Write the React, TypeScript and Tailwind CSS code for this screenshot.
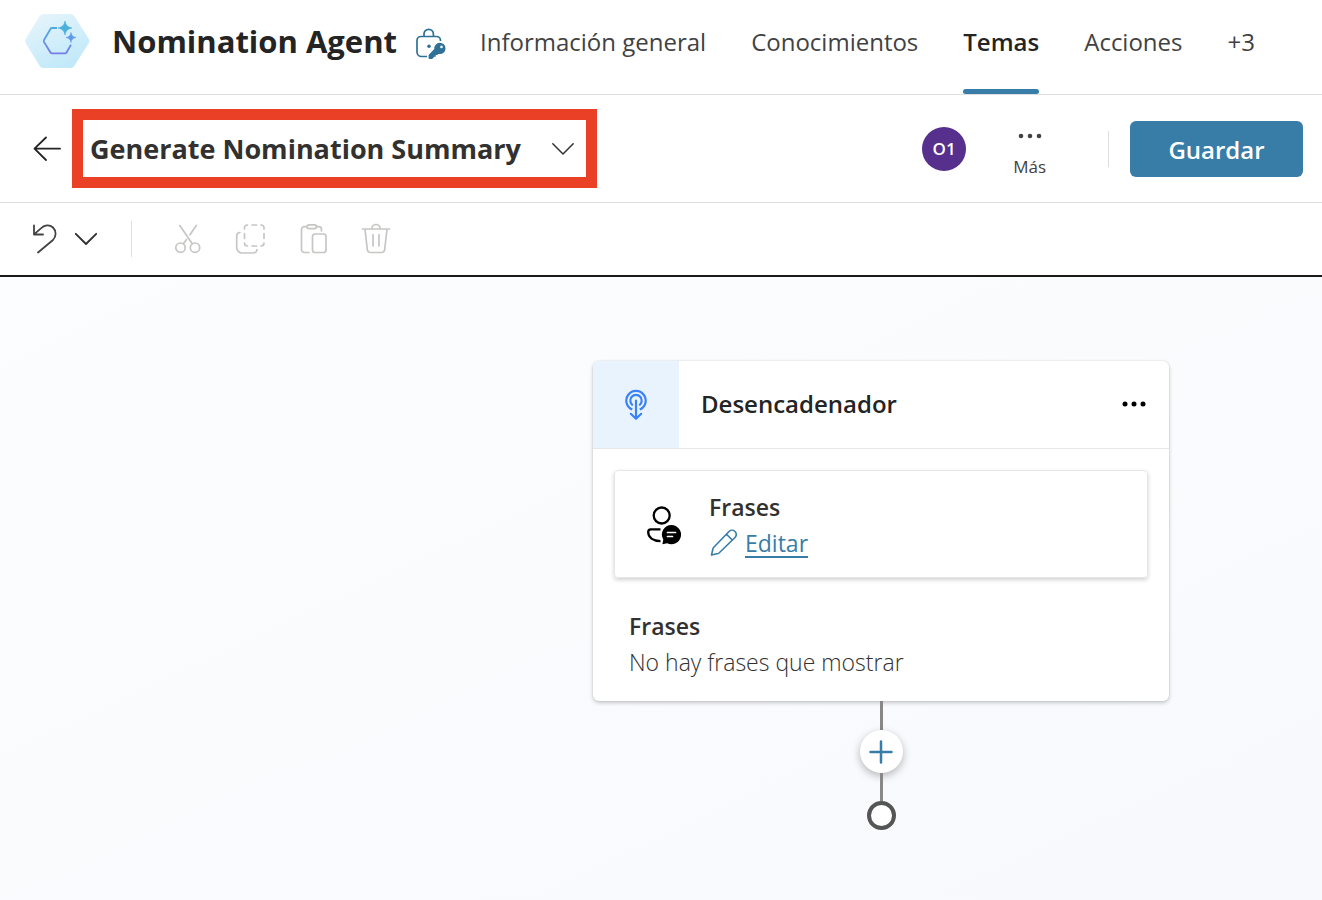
import React from "react";

const stroke = {
  fill: "none",
  stroke: "currentColor",
  strokeLinecap: "round" as const,
  strokeLinejoin: "round" as const,
};

function AgentLogo() {
  return (
    <svg width="66" height="56" viewBox="0 0 66 56" aria-hidden="true" className="shrink-0">
      <defs>
        <linearGradient id="hexFill" gradientUnits="userSpaceOnUse" x1="20" y1="0" x2="46" y2="56">
          <stop offset="0" stopColor="#e4f4fb" />
          <stop offset="1" stopColor="#bfe8f9" />
        </linearGradient>
        <linearGradient id="hexLine" gradientUnits="userSpaceOnUse" x1="0" y1="8" x2="0" y2="42">
          <stop offset="0" stopColor="#45b4d8" />
          <stop offset="0.5" stopColor="#5c9ee6" />
          <stop offset="1" stopColor="#7a79e6" />
        </linearGradient>
      </defs>
      <path
        d="M20 4H46a2 2 0 0 1 2 1L62 27a2 2 0 0 1 0 2L48 51a2 2 0 0 1-2 1H20a2 2 0 0 1-2-1L4.500 29a2 2 0 0 1 0-2L18 5a2 2 0 0 1 2-1Z"
        fill="url(#hexFill)"
        stroke="url(#hexFill)"
        strokeWidth="6"
        strokeLinejoin="round"
      />
      <path
        d="M33 15H28Q27 15 26.500 16L20 27Q19.500 28 20 29L26.500 39.500Q27 40.300 28 40.300H41Q42 40.300 42.500 39.500L47 31.800"
        fill="none"
        stroke="url(#hexLine)"
        strokeWidth="1.800"
      />
      <path d="M41 8C42 12.500 43.500 14 48 15C43.500 16 42 17.500 41 22C40 17.500 38.500 16 34 15C38.500 14 40 12.500 41 8Z" fill="#4bb0dc" stroke="#4bb0dc" strokeWidth="0.600" />
      <path d="M47 19.500C47.700 22.800 48.700 23.800 52 24.500C48.700 25.200 47.700 26.200 47 29.500C46.300 26.200 45.300 25.200 42 24.500C45.300 23.800 46.300 22.800 47 19.500Z" fill="#609ae6" stroke="#609ae6" strokeWidth="0.600" />
    </svg>
  );
}

function LockKey() {
  return (
    <svg width="32" height="32" viewBox="0 0 32 32" aria-hidden="true" className="shrink-0 text-[#2f7196]">
      <g {...stroke} strokeLinecap="butt" strokeWidth="1.700">
        <path d="M25.500 13V12.500a4 4 0 0 0-4-4H6a4 4 0 0 0-4 4V24a4.500 4.500 0 0 0 4.500 4.500H12" />
        <path d="M9 8.500V6a4.700 4.700 0 0 1 9.400 0V8.500" />
      </g>
      <circle cx="14" cy="18.300" r="1.800" fill="currentColor" />
      <path
        fillRule="evenodd"
        fill="currentColor"
        d="M24.800 14.700a5.700 5.700 0 0 1 0 11.400q-.8 0-1.500-.2l-1 1.200h-1.600v1.600h-1.500l-1.400 1.800q-.4.400-1 .400h-2.300q-.9 0-.9-.9v-2.700q0-.5.400-.9l5.300-5.300a5.700 5.700 0 0 1 5.500-6.400Zm1.700 2.900a1.300 1.300 0 1 0 0 2.600a1.300 1.300 0 0 0 0-2.600Z"
      />
    </svg>
  );
}

function BackArrow() {
  return (
    <svg width="30" height="28" viewBox="0 0 30 28" aria-hidden="true">
      <path d="M14 2.500L2.500 13.700L14 25M3 13.700H28" {...stroke} strokeWidth="1.800" />
    </svg>
  );
}

function Chevron({ weight }: { weight: number }) {
  return (
    <svg width="24" height="14" viewBox="0 0 24 14" aria-hidden="true">
      <path d="M1.800 1.800L12 12L22.200 1.800" {...stroke} strokeWidth={weight} />
    </svg>
  );
}

function Dots({ radius }: { radius: number }) {
  return (
    <svg width="24" height="6" viewBox="0 0 24 6" fill="currentColor" aria-hidden="true">
      <circle cx="3" cy="3" r={radius} />
      <circle cx="12" cy="3" r={radius} />
      <circle cx="21" cy="3" r={radius} />
    </svg>
  );
}

function Undo() {
  return (
    <svg width="26" height="32" viewBox="0 0 26 32" aria-hidden="true">
      <path d="M2 2.500V11.500H11M2.300 11.200L9.500 4.800C12.500 2 17.500 1.200 21 4.500C24.600 8 24.300 13.500 21 17L6 29.500" {...stroke} strokeWidth="1.800" />
    </svg>
  );
}

function Scissors() {
  return (
    <svg width="28" height="32" viewBox="0 0 28 32" aria-hidden="true">
      <g {...stroke} strokeWidth="1.700">
        <circle cx="6.500" cy="24.700" r="4.700" />
        <circle cx="21" cy="24.700" r="4.700" />
        <path d="M5.800 2.500L18.300 20.800M22.300 2.500L16 11.800M12.600 16.400L9.300 20.800" />
      </g>
    </svg>
  );
}

function CopyIcon() {
  return (
    <svg width="32" height="32" viewBox="0 0 32 32" aria-hidden="true">
      <g {...stroke} strokeWidth="1.700">
        <path d="M9.500 6V5a3 3 0 0 1 3-3M17 2h4.500M26 2a3 3 0 0 1 3 3v1M29 10.500v5M29 20a3 3 0 0 1-3 3M21.500 23H17M12.500 23a3 3 0 0 1-3-3M9.500 15.500v-5" />
        <path d="M5 9.500a3.500 3.500 0 0 0-3.300 3.500V24.500a5.500 5.500 0 0 0 5.500 5.500H18a4 4 0 0 0 4-3.500" />
      </g>
    </svg>
  );
}

function Paste() {
  return (
    <svg width="28" height="32" viewBox="0 0 28 32" aria-hidden="true">
      <g {...stroke} strokeWidth="1.700">
        <rect x="7" y="1.800" width="9.500" height="3.800" rx="1.900" />
        <path d="M7 3.700H4.200A2.700 2.700 0 0 0 1.500 6.400V26.500A3 3 0 0 0 4.500 29.500H9M16.500 3.700h2.300A2.700 2.700 0 0 1 21.500 6.400V8" />
        <rect x="12.500" y="11" width="13.500" height="18.500" rx="2.500" />
      </g>
    </svg>
  );
}

function Trash() {
  return (
    <svg width="30" height="32" viewBox="0 0 30 32" aria-hidden="true">
      <g {...stroke} strokeWidth="1.700">
        <path d="M1.500 6H28.500M11 6V5.500a4 4 0 0 1 8 0V6M4 6L6.300 26.500a3.300 3.300 0 0 0 3.300 3H20.400a3.300 3.300 0 0 0 3.300-3L26 6M12 11.700V23M18 11.700V23" />
      </g>
    </svg>
  );
}

function TriggerIcon() {
  return (
    <svg width="24" height="32" viewBox="0 0 24 32" aria-hidden="true" className="text-[#3b82f6]">
      <g {...stroke} strokeWidth="2.200">
        <path d="M8.300 20.600A9.700 9.700 0 1 1 15.700 20.600" strokeLinecap="butt" />
        <path d="M8.800 16.300A5.700 5.700 0 1 1 15.200 16.300" strokeLinecap="butt" />
        <path d="M12 11.500V29.500M6.800 24.800L12 29.800L17.200 24.800" />
      </g>
    </svg>
  );
}

function PersonChat() {
  return (
    <svg width="36" height="40" viewBox="0 0 36 40" aria-hidden="true" className="shrink-0 text-black">
      <circle cx="14.700" cy="10.500" r="8" {...stroke} strokeWidth="2.300" />
      <path d="M13.500 24.300H3.800A2.800 2.800 0 0 0 1.200 27.100C1.200 32.500 6 35.800 13.500 36.200" {...stroke} strokeLinecap="butt" strokeWidth="2.300" />
      <path d="M24.500 20a9.600 9.600 0 1 1-4.300 18.200L15.400 39.300L16.300 34.500A9.600 9.600 0 0 1 24.500 20Z" fill="currentColor" />
      <path d="M20.500 27.500H28.500M20.500 31.500H25.500" fill="none" stroke="white" strokeWidth="1.700" strokeLinecap="round" />
    </svg>
  );
}

function Pencil() {
  return (
    <svg width="28" height="28" viewBox="0 0 28 28" aria-hidden="true" className="shrink-0">
      <path d="M20 2.500A4.200 4.200 0 0 1 26 8.500L10.300 23.700Q9.700 24.300 9 24.500L2.500 26L4 19.500Q4.200 18.800 4.800 18.200L20 2.500ZM17.500 5.300L23.200 11" {...stroke} strokeWidth="1.600" />
    </svg>
  );
}

const tabs = ["Información general", "Conocimientos", "Temas", "Acciones", "+3"];

const tools = [
  { label: "Cortar", icon: <Scissors /> },
  { label: "Copiar", icon: <CopyIcon /> },
  { label: "Pegar", icon: <Paste /> },
  { label: "Eliminar", icon: <Trash /> },
];

export default function App() {
  return (
    <div className="flex min-h-screen flex-col bg-white font-['Open_Sans','Noto_Sans',sans-serif] text-[#323130]">
      <header className="flex h-[95px] items-start border-b border-[#dcdfe0] pl-[24px]">
        <div className="flex h-[82px] items-center">
          <AgentLogo />
          <h1 className="ml-[22px] text-[31px] leading-[40px] font-bold whitespace-nowrap text-[#242424]">Nomination Agent</h1>
          <span className="ml-[18px] pt-[6px]">
            <LockKey />
          </span>
        </div>
        <nav className="ml-[33px] flex gap-[45px] text-[24px] leading-[84px] whitespace-nowrap text-[#424242]">
          {tabs.map((tab) => (
            <a
              key={tab}
              href="#"
              className={
                tab === "Temas"
                  ? "flex h-[94px] flex-col justify-between font-semibold text-[#242424]"
                  : "flex h-[94px] flex-col"
              }
            >
              {tab}
              {tab === "Temas" && <span className="h-[5px] rounded-sm bg-[#387da8]" />}
            </a>
          ))}
        </nav>
      </header>

      <section className="flex h-[108px] items-center border-b border-[#dedede] pr-[19px] pl-[32px]">
        <button type="button" aria-label="Atrás" className="text-[#242424]">
          <BackArrow />
        </button>
        <button
          type="button"
          className="ml-[10px] flex h-[79px] w-[525px] items-center justify-between border-[11px] border-[#ea4025] pr-[11px] pl-[7px] whitespace-nowrap"
        >
          <span className="text-[27px] leading-[36px] font-bold">Generate Nomination Summary</span>
          <Chevron weight={1.5} />
        </button>
        <div className="ml-auto flex items-center">
          <span className="flex size-[44px] items-center justify-center rounded-full bg-[#572f8d] text-[17px] font-semibold text-white">O1</span>
          <button type="button" className="ml-[47px] flex flex-col items-center pt-[14px] text-[17px] leading-[24px] text-[#424242]">
            <Dots radius={2.3} />
            <span className="mt-[16px]">Más</span>
          </button>
          <span className="ml-[62px] h-[36px] w-px bg-[#dedede]" />
          <button type="button" className="ml-[21px] h-[56px] w-[173px] rounded-md bg-[#387da8] pt-[2px] text-[24px] font-semibold text-white">
            Guardar
          </button>
        </div>
      </section>

      <section className="flex h-[74px] items-center border-b-2 border-[#1b1a19] pl-[32px]">
        <button type="button" aria-label="Deshacer" className="text-[#424242]">
          <Undo />
        </button>
        <button type="button" aria-label="Historial de deshacer" className="ml-[16px] text-[#323130]">
          <Chevron weight={1.9} />
        </button>
        <span className="ml-[33px] h-[36px] w-px bg-[#dedede]" />
        <div className="ml-[42px] flex gap-[33px] text-[#c6c6c4]">
          {tools.map((tool) => (
            <button key={tool.label} type="button" aria-label={tool.label} disabled>
              {tool.icon}
            </button>
          ))}
        </div>
      </section>

      <main className="flex flex-1 flex-col items-center bg-linear-to-br from-[#fcfdfe] to-[#f8f9fd] pt-[84px] pb-[70px] pl-[440px]">
        <article className="w-[576px] overflow-hidden rounded-md bg-white shadow-[0_2px_4px_rgba(0,0,0,0.2),0_0_2px_rgba(0,0,0,0.12)]">
          <div className="flex h-[88px] border-b border-[#e6e6e6]">
            <div className="flex w-[86px] items-center justify-center bg-[#e8f3fe]">
              <TriggerIcon />
            </div>
            <div className="flex flex-1 items-center justify-between pr-[23px] pb-[2px] pl-[22px]">
              <h2 className="text-[24px] leading-[36px] font-semibold text-[#242424]">Desencadenador</h2>
              <button type="button" aria-label="Más opciones" className="text-black">
                <Dots radius={2.5} />
              </button>
            </div>
          </div>
          <div className="px-[21px] pt-[21px] pb-[21px]">
            <div className="flex items-center rounded-sm border border-[#e6e6e6] pt-[18px] pb-[16px] pl-[32px] shadow-[0_2px_4px_rgba(0,0,0,0.18)]">
              <PersonChat />
              <div className="ml-[26px] text-[23px] leading-[36px]">
                <h3 className="font-semibold">Frases</h3>
                <a href="#" className="flex items-center gap-[8px] text-[#387da8]">
                  <Pencil />
                  <span className="underline decoration-2 underline-offset-4">Editar</span>
                </a>
              </div>
            </div>
            <div className="mt-[30px] pl-[15px] text-[23px] leading-[36px]">
              <h3 className="font-semibold">Frases</h3>
              <p className="font-light">No hay frases que mostrar</p>
            </div>
          </div>
        </article>
        <span className="h-[29px] w-[3px] bg-[#8a8886]" />
        <button
          type="button"
          aria-label="Agregar nodo"
          className="flex size-[43px] items-center justify-center rounded-full bg-white text-[#387da8] shadow-[0_3px_8px_rgba(0,0,0,0.28)]"
        >
          <svg width="24" height="24" viewBox="0 0 24 24" aria-hidden="true">
            <path d="M12 1.500V22.500M1.500 12H22.500" {...stroke} strokeWidth="2.500" />
          </svg>
        </button>
        <span className="h-[28px] w-[3px] bg-[#8a8886]" />
        <span className="size-[29px] rounded-full border-4 border-[#555] bg-white" />
      </main>
    </div>
  );
}
